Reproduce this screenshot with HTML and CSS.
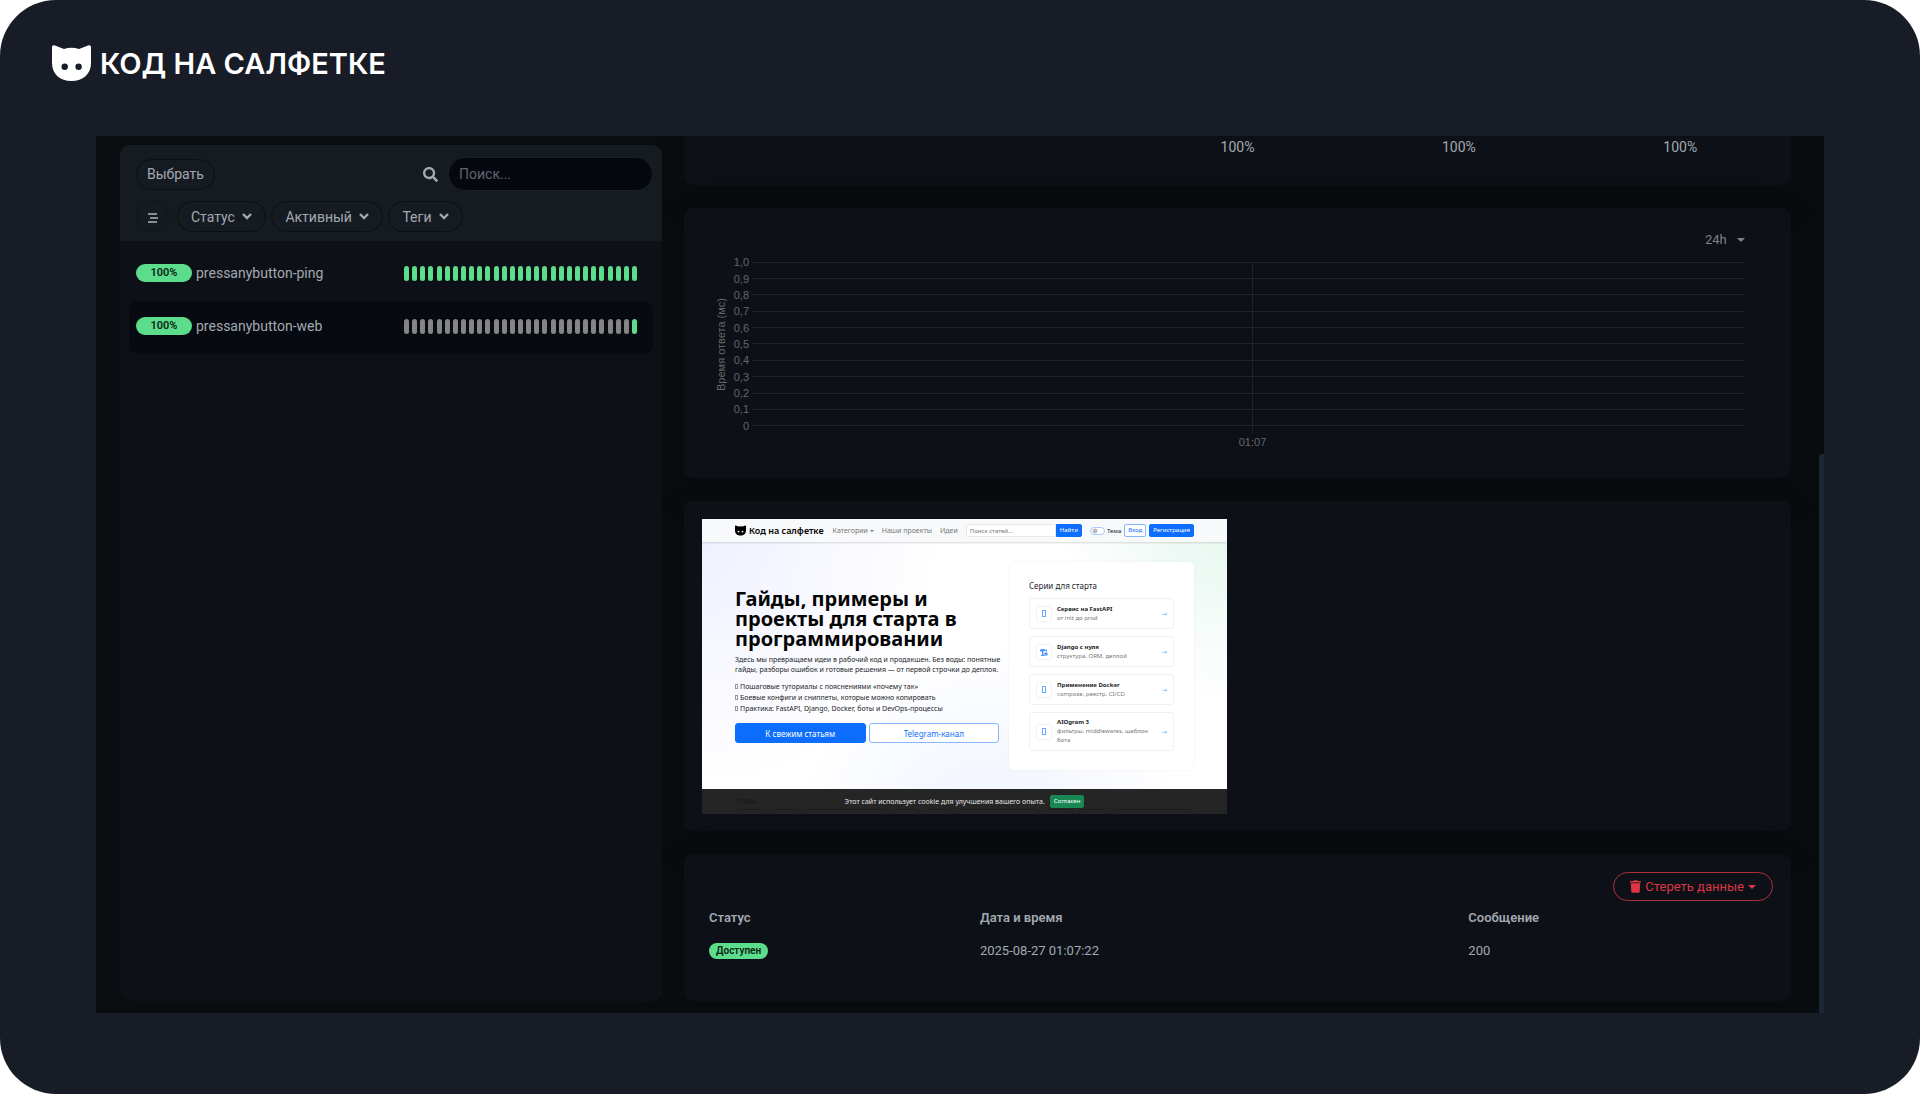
FILE: index.html
```html
<!DOCTYPE html>
<html lang="ru">
<head>
    <meta charset="UTF-8">
    <title>Код на салфетке</title>
    <meta name="viewport" content="width=device-width, initial-scale=1.0">
    <link rel="stylesheet" href="styles.css">
</head>
<body>
    <div class="frame">
        <header class="brand">
            <svg class="brand-cat" viewBox="0 0 39 36" aria-hidden="true">
                <path fill="#fff" fill-rule="evenodd" d="M0 2.200C0 .4 1.600-.3 3 .5L12 4Q19.500 1.600 27 4L36 .5C37.400-.3 39 .4 39 2.200V18C39 29 31 36 19.500 36S0 29 0 18ZM12.700 18.500a3.200 3.200 0 1 0 0 6.400a3.200 3.200 0 1 0 0-6.400ZM26.600 18.500a3.200 3.200 0 1 0 0 6.400a3.200 3.200 0 1 0 0-6.400Z"/>
            </svg>
            <span>КОД НА САЛФЕТКЕ</span>
        </header>

        <main class="app">
            <section class="monitors">
                <div class="monitors-header">
                    <div class="toolbar">
                        <button class="btn btn-select" type="button">Выбрать</button>
                        <form class="search">
                            <label for="search-input" aria-label="Поиск">
                                <svg class="icon-search" viewBox="0 0 512 512" aria-hidden="true"><path fill="currentColor" d="M505 442.700L405.300 343c-4.500-4.500-10.600-7-17-7H372c27.600-35.300 44-79.700 44-128C416 93.100 322.900 0 208 0S0 93.100 0 208s93.100 208 208 208c48.300 0 92.700-16.400 128-44v16.300c0 6.400 2.500 12.500 7 17l99.700 99.700c9.400 9.400 24.600 9.400 33.900 0l28.300-28.300c9.400-9.400 9.400-24.600.1-34zM208 336c-70.700 0-128-57.200-128-128 0-70.700 57.200-128 128-128 70.700 0 128 57.200 128 128 0 70.700-57.200 128-128 128z"/></svg>
                            </label>
                            <input type="search" id="search-input" placeholder="Поиск...">
                        </form>
                    </div>
                    <div class="filters">
                        <button class="btn btn-menu" type="button" aria-label="Сортировка">
                            <svg viewBox="0 0 12 12" aria-hidden="true"><path d="M1 2h9M3 6h8M1 10h9" stroke="currentColor" stroke-width="2"/></svg>
                        </button>
                        <button class="btn btn-filter" type="button">Статус <svg class="chevron" viewBox="0 0 10 7" aria-hidden="true"><path d="M1 1l4 4 4-4" fill="none" stroke="currentColor" stroke-width="2.400"/></svg></button>
                        <button class="btn btn-filter" type="button">Активный <svg class="chevron" viewBox="0 0 10 7" aria-hidden="true"><path d="M1 1l4 4 4-4" fill="none" stroke="currentColor" stroke-width="2.400"/></svg></button>
                        <button class="btn btn-filter" type="button">Теги <svg class="chevron" viewBox="0 0 10 7" aria-hidden="true"><path d="M1 1l4 4 4-4" fill="none" stroke="currentColor" stroke-width="2.400"/></svg></button>
                    </div>
                </div>
                <div class="monitor-list">
                    <a class="monitor" href="#ping">
                        <span class="badge badge-uptime">100%</span>
                        <span class="monitor-name">pressanybutton-ping</span>
                        <span class="beats" data-empty="0"></span>
                    </a>
                    <a class="monitor active" href="#web">
                        <span class="badge badge-uptime">100%</span>
                        <span class="monitor-name">pressanybutton-web</span>
                        <span class="beats" data-empty="28"></span>
                    </a>
                </div>
            </section>

            <section class="details">
                <div class="card stats">
                    <span>100%</span>
                    <span>100%</span>
                    <span>100%</span>
                </div>

                <div class="card chart-card">
                    <button class="period" type="button">24h <span class="caret"></span></button>
                    <div class="chart">
                        <div class="axis-title">Время ответа (мс)</div>
                        <div class="ticks">
                            <div class="tick">1,0</div>
                            <div class="tick">0,9</div>
                            <div class="tick">0,8</div>
                            <div class="tick">0,7</div>
                            <div class="tick">0,6</div>
                            <div class="tick">0,5</div>
                            <div class="tick">0,4</div>
                            <div class="tick">0,3</div>
                            <div class="tick">0,2</div>
                            <div class="tick">0,1</div>
                            <div class="tick">0</div>
                        </div>
                        <div class="plot">
                            <div class="grid-lines">
                                <i></i><i></i><i></i><i></i><i></i><i></i><i></i><i></i><i></i><i></i><i></i>
                            </div>
                            <div class="time-line"></div>
                            <div class="time-label">01:07</div>
                        </div>
                    </div>
                </div>

                <div class="card shot-card">
                    <div class="shot">
                        <nav class="shot-nav">
                            <svg class="shot-cat" viewBox="0 0 39 36" aria-hidden="true">
                                <path fill="#000" fill-rule="evenodd" d="M0 2.200C0 .4 1.600-.3 3 .5L12 4Q19.500 1.600 27 4L36 .5C37.400-.3 39 .4 39 2.200V18C39 29 31 36 19.500 36S0 29 0 18ZM12.700 18.500a3.200 3.200 0 1 0 0 6.400a3.200 3.200 0 1 0 0-6.400ZM26.600 18.500a3.200 3.200 0 1 0 0 6.400a3.200 3.200 0 1 0 0-6.400Z"/>
                            </svg>
                            <b class="shot-brand">Код на салфетке</b>
                            <a class="shot-link" href="#categories">Категории <span class="shot-caret"></span></a>
                            <a class="shot-link" href="#projects">Наши проекты</a>
                            <a class="shot-link" href="#ideas">Идеи</a>
                            <input class="shot-search" type="text" placeholder="Поиск статей..." aria-label="Поиск статей">
                            <button class="shot-btn shot-find" type="button">Найти</button>
                            <input class="shot-switch" type="checkbox" id="theme"><label for="theme">Тема</label>
                            <button class="shot-btn shot-outline" type="button">Вход</button>
                            <button class="shot-btn" type="button">Регистрация</button>
                        </nav>
                        <div class="shot-body">
                            <div class="hero">
                                <h1>Гайды, примеры и<br>проекты для старта в<br>программировании</h1>
                                <p>Здесь мы превращаем идеи в рабочий код и продакшен. Без воды: понятные<br>гайды, разборы ошибок и готовые решения — от первой строчки до деплоя.</p>
                                <ul>
                                    <li><i class="tofu"></i>Пошаговые туториалы с пояснениями «почему так»</li>
                                    <li><i class="tofu"></i>Боевые конфиги и сниппеты, которые можно копировать</li>
                                    <li><i class="tofu"></i>Практика: FastAPI, Django, Docker, боты и DevOps-процессы</li>
                                </ul>
                                <div class="hero-actions">
                                    <button class="hero-btn" type="button">К свежим статьям</button>
                                    <button class="hero-btn hero-btn-outline" type="button">Telegram-канал</button>
                                </div>
                            </div>
                            <div class="series">
                                <h2>Серии для старта</h2>
                                <a class="series-item" href="#fastapi">
                                    <span class="series-icon"><i class="tofu"></i></span>
                                    <span class="series-text"><b>Сервис на FastAPI</b><br>от init до prod</span>
                                    <span class="arrow">→</span>
                                </a>
                                <a class="series-item" href="#django">
                                    <span class="series-icon">
                                        <svg viewBox="0 0 16 16" aria-hidden="true"><path fill="#4d94ff" d="M1 2h6l7 2v3h-2V6H7v8h2v2H2v-2h2V7H0V4h1zM9 9h6v6H9z"/></svg>
                                    </span>
                                    <span class="series-text"><b>Django с нуля</b><br>структура, ORM, деплой</span>
                                    <span class="arrow">→</span>
                                </a>
                                <a class="series-item" href="#docker">
                                    <span class="series-icon"><i class="tofu"></i></span>
                                    <span class="series-text"><b>Применение Docker</b><br>compose, реестр, CI/CD</span>
                                    <span class="arrow">→</span>
                                </a>
                                <a class="series-item" href="#aiogram">
                                    <span class="series-icon"><i class="tofu"></i></span>
                                    <span class="series-text"><b>AIOgram 3</b><br>фильтры, middlewares, шаблон бота</span>
                                    <span class="arrow">→</span>
                                </a>
                            </div>
                        </div>
                        <div class="cookie">
                            <span class="topics">ТЕМЫ</span>
                            <div class="topic-pills">
                                <i></i><i></i><i></i><i></i><i></i><i></i><i></i><i></i><i></i>
                            </div>
                            <span>Этот сайт использует cookie для улучшения вашего опыта.</span>
                            <button class="shot-btn cookie-btn" type="button">Согласен</button>
                        </div>
                    </div>
                </div>

                <div class="card events">
                    <button class="btn-clear" type="button">
                        <svg class="icon-trash" viewBox="0 0 448 512" aria-hidden="true"><path fill="currentColor" d="M432 32H312l-9.400-18.700A24 24 0 0 0 281.100 0H166.800a23.700 23.700 0 0 0-21.400 13.300L136 32H16A16 16 0 0 0 0 48v32a16 16 0 0 0 16 16h416a16 16 0 0 0 16-16V48a16 16 0 0 0-16-16zM53.200 467a48 48 0 0 0 47.900 45h245.800a48 48 0 0 0 47.900-45L416 128H32z"/></svg>
                        Стереть данные
                        <span class="caret"></span>
                    </button>
                    <table>
                        <thead>
                            <tr>
                                <th class="col-status">Статус</th>
                                <th class="col-date">Дата и время</th>
                                <th>Сообщение</th>
                            </tr>
                        </thead>
                        <tbody>
                            <tr>
                                <td><span class="badge badge-status">Доступен</span></td>
                                <td>2025-08-27 01:07:22</td>
                                <td>200</td>
                            </tr>
                        </tbody>
                    </table>
                </div>
            </section>
            <div class="scroll-thumb"></div>
        </main>
    </div>

    <script>
        // Fill the heartbeat bars, the empty ones come first
        const BEAT_COUNT = 29;

        document.querySelectorAll('.beats').forEach(beats => {
            const empty = Number(beats.dataset.empty);
            for (let i = 0; i < BEAT_COUNT; i++) {
                const beat = document.createElement('span');
                beat.className = i < empty ? 'beat empty' : 'beat';
                beats.appendChild(beat);
            }
        });
    </script>
</body>
</html>
```
FILE: styles.css
```css
* {
    box-sizing: border-box;
    margin: 0;
    padding: 0;
}

body {
    background: #fff;
    font-family: Roboto, sans-serif;
    font-size: 14px;
    color: #a3a9b1;
}

button,
input {
    font-family: inherit;
}

button {
    cursor: pointer;
}

a {
    color: inherit;
    text-decoration: none;
}

.frame {
    display: flex;
    flex-direction: column;
    min-height: 100vh;
    padding: 0 5% 81px;
    background: #181c26;
    border-radius: 56px;
}

/* Logo */
.brand {
    display: flex;
    align-items: center;
    gap: 9px;
    height: 136px;
    padding-bottom: 10px;
    margin-left: -44px;
    font-family: Inter, sans-serif;
    font-size: 29px;
    font-weight: 600;
    color: #fff;
}

.brand-cat {
    width: 39px;
    height: 36px;
}

.app {
    position: relative;
    display: flex;
    gap: 22px;
    flex: 1;
    padding: 0 33px 12px 24px;
    background: #0a0d10;
    overflow: hidden;
}

/* Monitor list */
.monitors {
    position: relative;
    z-index: 1;
    flex: 0 0 542px;
    margin-top: 9px;
    background: #0d1117;
    border-radius: 9px;
    overflow: hidden;
}

.monitors-header {
    padding: 12px 9px 9px 16px;
    background: #161b22;
}

.toolbar,
.search,
.filters {
    display: flex;
    align-items: center;
}

.toolbar {
    justify-content: space-between;
    margin-bottom: 10px;
}

.btn {
    height: 31px;
    padding: 0 10px;
    background: #161b22;
    border: 1px solid #0b0f13;
    border-radius: 16px;
    font-size: 14px;
    color: #a3a9b1;
}

.search {
    gap: 10px;
}

.icon-search {
    display: block;
    width: 15px;
    height: 15px;
}

#search-input {
    width: 205px;
    height: 34px;
    padding: 0 10px;
    background: #05080f;
    border: 1px solid #1a212d;
    border-radius: 17px;
    font-size: 14px;
    color: #a3a9b1;
}

#search-input::placeholder {
    color: #5f656e;
}

.filters {
    gap: 5px;
}

.btn-menu {
    width: 33px;
    margin-right: 3px;
    padding: 0;
    border-color: #11161b;
    color: #888e96;
}

.btn-menu svg {
    width: 12px;
    height: 12px;
    vertical-align: middle;
}

.btn-filter {
    padding: 0 13px;
}

.chevron {
    width: 10px;
    height: 7px;
    margin: 0 0 2px 4px;
}

.monitor-list {
    padding: 7px 9px;
}

.monitor {
    display: flex;
    align-items: center;
    height: 53px;
    padding: 0 16px 3px 7px;
    border-radius: 9px;
}

.monitor.active {
    background: #070a10;
}

.monitor-name {
    margin-left: 4px;
}

.badge {
    display: inline-block;
    background: #5cdd8b;
    border-radius: 10px;
    font-weight: 600;
    color: #0b2415;
    text-align: center;
}

.badge-uptime {
    width: 56px;
    font-size: 11px;
    line-height: 18px;
}

.beats {
    display: flex;
    justify-content: space-between;
    width: 233px;
    margin-left: auto;
}

.beat {
    width: 5px;
    height: 15px;
    background: #5cdd8b;
    border-radius: 3px;
}

.beat.empty {
    background: #848484;
}

/* Right column */
.details {
    display: flex;
    flex-direction: column;
    gap: 23px;
    flex: 1;
    min-width: 0;
}

.card {
    padding: 18px;
    background: #0d1117;
    border-radius: 9px;
    box-shadow: 0 15px 70px rgba(0, 0, 0, 0.05);
}

.stats {
    display: grid;
    grid-template-columns: repeat(5, 1fr);
    height: 49px;
    padding: 3px 0 0;
    border-radius: 0 0 9px 9px;
    text-align: center;
}

.stats span:first-child {
    grid-column-start: 3;
}

.chart-card {
    padding: 20px 46px 28px 30px;
}

.period {
    display: block;
    height: 22px;
    margin: 0 0 4px auto;
    background: none;
    border: none;
    font-size: 13px;
    color: #7c828a;
}

.caret {
    display: inline-block;
    margin: 0 0 2px 7px;
    border-top: 4px solid;
    border-left: 4px solid transparent;
    border-right: 4px solid transparent;
}

.chart {
    display: flex;
    font-family: "Liberation Sans", Arial, sans-serif;
    font-size: 11px;
    color: #646669;
}

.axis-title {
    width: 14px;
    height: 180px;
    writing-mode: vertical-rl;
    transform: rotate(180deg);
    text-align: center;
    line-height: 14px;
}

.ticks,
.grid-lines {
    display: grid;
    grid-template-rows: repeat(11, 1fr);
    align-items: center;
    height: 180px;
}

.ticks {
    width: 21px;
    text-align: right;
}

.tick {
    line-height: 12px;
}

.plot {
    position: relative;
    flex: 1;
    margin-left: 3px;
}

.grid-lines i {
    height: 1px;
    background: #202429;
}

/* one tick for the only time on the axis, centred in the plot */
.time-line {
    position: absolute;
    top: 8px;
    left: 50%;
    width: 1px;
    height: 171px;
    margin-left: 3px;
    background: #202429;
}

.time-label {
    padding-left: 8px;
    line-height: 16px;
    text-align: center;
}

/* Site screenshot */
.shot-card {
    padding-bottom: 17px;
}

.shot {
    position: relative;
    width: 525px;
    height: 295px;
    max-width: 100%;
    overflow: hidden;
    background: radial-gradient(circle at 0 10%, #f0f1ff, transparent 40%),
        radial-gradient(circle at 100% 5%, #e8f7f0, transparent 28%),
        radial-gradient(circle at 55% 110%, #edf2ff, transparent 45%), #fff;
    font-family: "Noto Sans", sans-serif;
    font-size: 7px;
    color: #212529;
}

.shot-nav {
    display: flex;
    align-items: center;
    height: 23px;
    padding: 0 33px;
    background: #f8f9fa;
    box-shadow: 0 1px 2px rgba(0, 0, 0, 0.15);
    font-size: 6px;
}

.shot-cat {
    width: 11px;
    height: 11px;
    margin-right: 3px;
}

.shot-brand {
    margin-right: 9px;
    font-size: 9px;
    font-weight: 600;
    color: #000;
    white-space: nowrap;
}

.shot-link {
    margin-right: 8px;
    font-size: 7px;
    color: #777;
    white-space: nowrap;
}

.shot-caret {
    display: inline-block;
    vertical-align: middle;
    border-top: 2px solid;
    border-left: 2px solid transparent;
    border-right: 2px solid transparent;
}

.shot-search {
    flex: 1;
    min-width: 0;
    height: 13px;
    padding: 0 3px;
    background: #fff;
    border: 1px solid #e6e8ea;
    border-radius: 2px 0 0 2px;
    font-size: 6px;
}

.shot-btn {
    height: 13px;
    padding: 0 3px;
    background: #0d6efd;
    border: 1px solid #0d6efd;
    border-radius: 2px;
    font-size: 6px;
    line-height: 11px;
    color: #fff;
}

.shot-btn + .shot-btn {
    margin-left: 3px;
}

.shot-find {
    border-radius: 0 2px 2px 0;
}

.shot-switch {
    appearance: none;
    width: 15px;
    height: 8px;
    margin: 0 2px 0 8px;
    background: radial-gradient(circle at 4px 3px, #bbb 2px, #fff 3px);
    border: 1px solid #a5cdff;
    border-radius: 4px;
}

.shot-outline {
    margin-left: 3px;
    background: #fff;
    border-color: #86b7fe;
    color: #0d6efd;
}

.shot-body {
    display: flex;
    justify-content: space-between;
    padding: 20px 33px 0;
}

.hero {
    width: 264px;
    padding-top: 27px;
}

.hero h1 {
    margin-bottom: 6px;
    font-size: 20px;
    line-height: 20px;
    color: #050505;
    white-space: nowrap;
}

.hero p {
    margin-bottom: 6px;
    line-height: 10px;
    white-space: nowrap;
}

.hero ul {
    margin-bottom: 9px;
    list-style: none;
    line-height: 11px;
    white-space: nowrap;
}

.tofu {
    display: inline-block;
    width: 3px;
    height: 5px;
    margin-right: 2px;
    border: 1px solid #999;
}

.hero-actions {
    display: flex;
    gap: 3px;
}

.hero-btn {
    flex: 1;
    height: 20px;
    background: #0d6efd;
    border: 1px solid #0d6efd;
    border-radius: 3px;
    font-size: 8px;
    color: #fff;
}

.hero-btn-outline {
    background: #fff;
    border-color: #86b7fe;
    color: #0d6efd;
}

.series {
    width: 185px;
    height: 208px;
    padding: 18px 20px;
    background: #fff;
    border-radius: 6px;
    box-shadow: 0 0 3px rgba(0, 0, 0, 0.06);
}

.series h2 {
    margin-bottom: 6px;
    font-size: 8px;
    font-weight: 400;
    line-height: 12px;
}

.series-item {
    display: flex;
    align-items: center;
    min-height: 31px;
    margin-bottom: 7px;
    padding: 5px 6px;
    border: 1px solid #f0f1f2;
    border-radius: 3px;
    font-size: 6px;
    line-height: 9px;
    color: #777;
}

.series-icon {
    display: flex;
    align-items: center;
    justify-content: center;
    width: 16px;
    height: 16px;
    margin-right: 5px;
    border: 1px solid #eff1f3;
    border-radius: 3px;
}

.series-icon .tofu {
    width: 4px;
    height: 7px;
    margin: 0;
    border-color: #6ea8fe;
}

.series-icon svg {
    width: 8px;
    height: 8px;
}

.series-text {
    flex: 1;
}

.series-text b {
    color: #212529;
}

.arrow {
    font-family: "DejaVu Sans", sans-serif;
    color: #6ea8fe;
}

/* cookie bar lies over the page */
.cookie {
    position: absolute;
    right: 0;
    bottom: 0;
    left: 0;
    display: flex;
    align-items: center;
    justify-content: center;
    gap: 5px;
    height: 25px;
    background: #252525;
    color: #e6e6e6;
    overflow: hidden;
}

.topics {
    position: absolute;
    left: 34px;
    color: #161616;
}

.topic-pills {
    position: absolute;
    top: 20px;
    right: 33px;
    left: 35px;
    display: flex;
    gap: 4px;
}

.topic-pills i {
    flex: 1;
    height: 10px;
    border: 1px solid #1e1e1e;
    border-radius: 5px;
}

.topic-pills i:nth-child(3n) {
    flex: 3;
}

.cookie-btn {
    background: #198754;
    border-color: #198754;
}

/* Events */
.events {
    height: 147px;
}

.btn-clear {
    display: flex;
    align-items: center;
    height: 29px;
    margin-left: auto;
    padding: 0 16px;
    background: none;
    border: 1px solid #b02d3b;
    border-radius: 15px;
    font-size: 13px;
    color: #dc3545;
}

.btn-clear .caret {
    margin: 0 0 0 4px;
}

.icon-trash {
    width: 11px;
    height: 13px;
    margin-right: 4px;
}

table {
    width: 100%;
    border-collapse: collapse;
    table-layout: fixed;
    font-size: 13px;
}

th,
td {
    height: 33px;
    padding: 0 7px;
    text-align: left;
}

th {
    font-weight: 600;
}

.col-status {
    width: 25.3%;
}

.col-date {
    width: 45.6%;
}

.badge-status {
    padding: 0 7px;
    font-size: 10px;
    line-height: 16px;
    vertical-align: middle;
}

.scroll-thumb {
    position: absolute;
    top: 318px;
    right: 0;
    bottom: 0;
    width: 5px;
    background: #1d2634;
    border-radius: 4px 0 0 0;
}
```
